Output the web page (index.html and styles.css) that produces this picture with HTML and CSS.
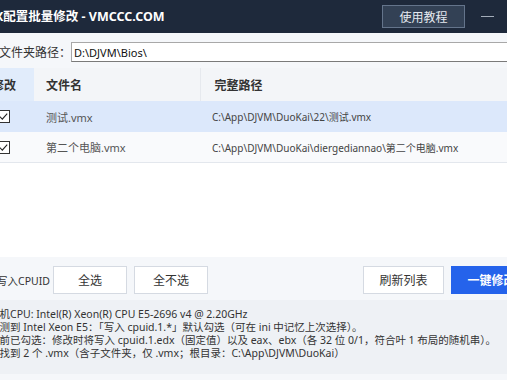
FILE: index.html
```html
<!DOCTYPE html>
<html lang="zh-CN">
<head>
    <meta charset="UTF-8">
    <meta name="viewport" content="width=device-width, initial-scale=1.0">
    <title>VMX配置批量修改 - VMCCC.COM</title>
    <link rel="stylesheet" href="styles.css">
</head>
<body>
    <div class="window">
        <header class="titlebar">
            <div class="title">VMX配置批量修改 - VMCCC.COM</div>
            <button class="help-btn">使用教程</button>
            <span class="win-ctl"><span class="min-bar"></span></span>
            <span class="win-ctl close">✕</span>
        </header>

        <div class="path-row">
            <label for="folder">文件夹路径：</label>
            <input type="text" id="folder" value="D:\DJVM\Bios\">
        </div>

        <table class="files">
            <colgroup>
                <col class="col-check">
                <col class="col-name">
                <col>
            </colgroup>
            <thead>
                <tr>
                    <th class="th-check">修改</th>
                    <th>文件名</th>
                    <th class="th-path">完整路径</th>
                </tr>
            </thead>
            <tbody>
                <tr class="selected">
                    <td class="cell-check">
                        <svg width="13" height="13" viewBox="0 0 13 13"><rect x="0.5" y="0.5" width="12" height="12" fill="#fff" stroke="#333"/><path d="M2.8 6.6 L5.3 9.1 L10.2 3.6" fill="none" stroke="#222" stroke-width="1.1"/></svg>
                    </td>
                    <td class="cell-name">测试.vmx</td>
                    <td class="cell-path">C:\App\DJVM\DuoKai\22\测试.vmx</td>
                </tr>
                <tr>
                    <td class="cell-check">
                        <svg width="13" height="13" viewBox="0 0 13 13"><rect x="0.5" y="0.5" width="12" height="12" fill="#fff" stroke="#333"/><path d="M2.8 6.6 L5.3 9.1 L10.2 3.6" fill="none" stroke="#222" stroke-width="1.1"/></svg>
                    </td>
                    <td class="cell-name">第二个电脑.vmx</td>
                    <td class="cell-path">C:\App\DJVM\DuoKai\diergediannao\第二个电脑.vmx</td>
                </tr>
            </tbody>
        </table>

        <div class="list-space"></div>

        <div class="toolbar">
            <span class="tool-label">写入CPUID</span>
            <button class="btn">全选</button>
            <button class="btn">全不选</button>
            <span class="spacer"></span>
            <button class="btn btn-wide">刷新列表</button>
            <button class="btn btn-primary">一键修改</button>
        </div>

        <div class="info">
            <div>主机CPU: Intel(R) Xeon(R) CPU E5-2696 v4 @ 2.20GHz</div>
            <div>检测到 Intel Xeon E5：「写入 cpuid.1.*」默认勾选（可在 ini 中记忆上次选择）。</div>
            <div>当前已勾选：修改时将写入 cpuid.1.edx（固定值）以及 eax、ebx（各 32 位 0/1，符合叶 1 布局的随机串）。</div>
            <div>已找到 2 个 .vmx（含子文件夹，仅 .vmx；根目录：C:\App\DJVM\DuoKai）</div>
        </div>

        <div class="footer"></div>
    </div>
</body>
</html>
```

FILE: styles.css
```css
body {
    margin: 0;
    overflow: hidden;
    background-color: #f5f7fa;
    font-family: 'Noto Sans', 'Noto Sans CJK SC', sans-serif;
    color: #333;
}
.window {
    width: 568px;
    margin-left: -24px;
    background-color: #f5f7fa;
}
.titlebar {
    display: flex;
    align-items: center;
    height: 33px;
    background-color: #1e293b;
}
.title {
    flex: 1;
    margin-left: -1px;
    color: #ffffff;
    font-size: 12.5px;
    font-weight: bold;
    line-height: 33px;
    white-space: nowrap;
}
.help-btn {
    width: 83px;
    height: 23px;
    padding: 0;
    background-color: #334155;
    border: 1px solid #64748b;
    color: #e5e9f0;
    font-family: inherit;
    font-size: 12px;
    margin-right: 6px;
}
.win-ctl {
    display: flex;
    align-items: center;
    justify-content: center;
    width: 32px;
    height: 33px;
    color: #cbd5e1;
    font-size: 12px;
}
.min-bar {
    display: block;
    width: 13px;
    height: 1px;
    background-color: #a3acb9;
}
.close {
    margin-right: 9px;
}
.path-row {
    display: flex;
    align-items: center;
    padding: 9px 12px 6px 23px;
}
.path-row label {
    width: 72px;
    font-size: 12px;
    color: #333;
}
.path-row input {
    flex: 1;
    height: 20px;
    box-sizing: border-box;
    padding: 0 2px;
    border: 1px solid #a8a8a8;
    border-bottom-color: #7a7a7a;
    font-family: inherit;
    font-size: 11px;
    color: #111;
    background-color: #fff;
}
.files {
    width: 100%;
    border-collapse: collapse;
    table-layout: fixed;
}
.col-check {
    width: 58px;
}
.col-name {
    width: 166px;
}
.files th {
    height: 33px;
    padding: 0 0 0 12px;
    text-align: left;
    font-size: 12px;
    font-weight: bold;
    color: #333;
    background-color: #f3f5f8;
    border-right: 1px solid #e6e9ee;
}
.files th.th-check {
    padding-left: 16px;
    background-color: #e1ecfb;
    border-right: none;
}
.files th.th-path {
    padding-left: 14px;
    border-right: none;
}
.files td {
    height: 30px;
    padding: 0;
    background-color: #f9fafc;
    border-bottom: 1px solid #e3e7ed;
    white-space: nowrap;
    overflow: hidden;
}
.files tr.selected td {
    height: 31px;
    background-color: #dce8fb;
    border-bottom: none;
}
.cell-check {
    padding-left: 21px !important;
    line-height: 0;
}
.cell-name {
    padding-left: 12px !important;
    font-size: 11px;
    color: #555;
}
.cell-path {
    padding-left: 12px !important;
    font-size: 10px;
    color: #444;
}
.list-space {
    height: 94px;
    background-color: #ffffff;
}
.toolbar {
    display: flex;
    align-items: center;
    gap: 7px;
    padding: 9px 12px 6px 21px;
}
.tool-label {
    width: 49px;
    font-size: 10.5px;
    color: #333;
    white-space: nowrap;
}
.spacer {
    flex: 1;
}
.btn {
    width: 74px;
    height: 28px;
    padding: 0;
    background-color: #ffffff;
    border: 1px solid #d5dae2;
    font-family: inherit;
    font-size: 12px;
    color: #333;
}
.btn-wide {
    width: 81px;
}
.btn-primary {
    width: 81px;
    background-color: #2563eb;
    border-color: #2563eb;
    color: #ffffff;
    font-weight: bold;
}
.info {
    padding: 8px 12px 14px 13px;
    background-color: #eef1f5;
    font-size: 10.5px;
    line-height: 13px;
    color: #333;
    white-space: nowrap;
}
.footer {
    height: 10px;
    background-color: #f5f7fa;
}
```
